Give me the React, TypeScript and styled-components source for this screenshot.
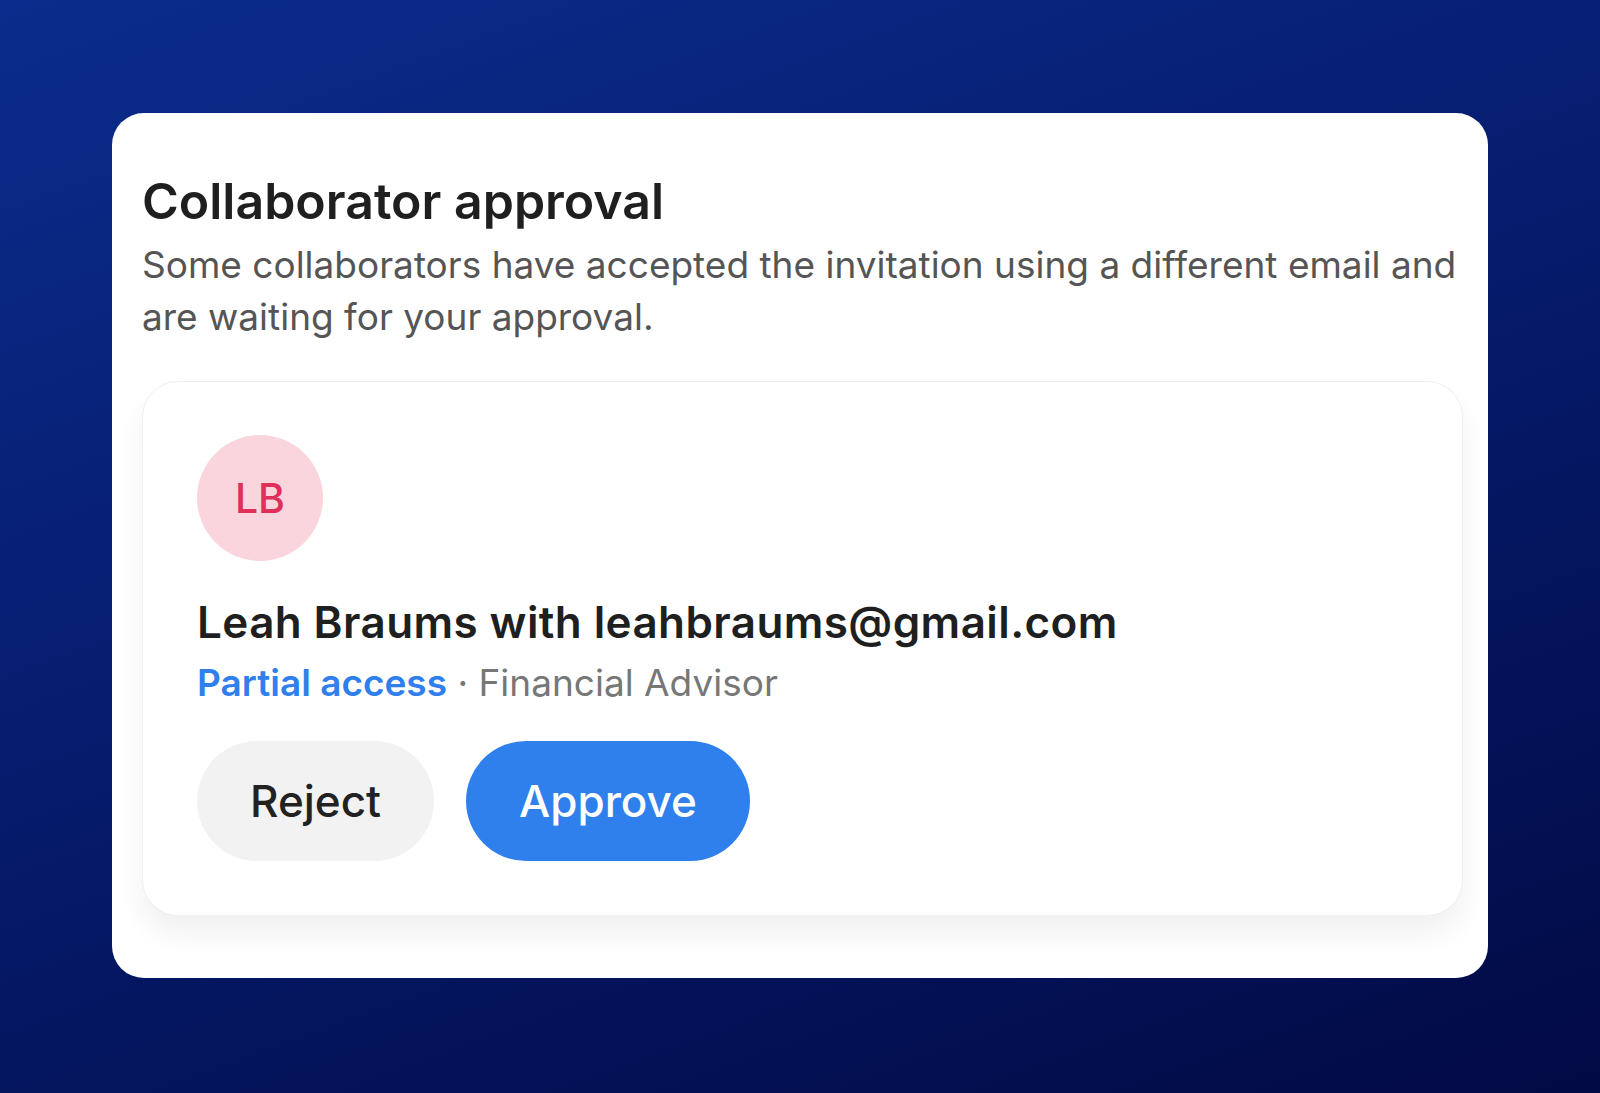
import styled, { createGlobalStyle } from "styled-components"

const GlobalStyle = createGlobalStyle`
	html, body {
		margin: 0;
		padding: 0;
	}
	body {
		font-family: Inter, "Noto Sans", "Liberation Sans", sans-serif;
		-webkit-font-smoothing: antialiased;
	}
`

const Page = styled.div`
	box-sizing: border-box;
	width: 1600px;
	height: 1093px;
	padding: 113px 112px 0;
	background: linear-gradient(160deg, #0b2c8c 0%, #061c6e 45%, #020a45 100%);
`

const Panel = styled.section`
	box-sizing: border-box;
	width: 1376px;
	height: 865px;
	padding: 60px 25px 0 30px;
	background: #fff;
	border-radius: 32px;
`

const Title = styled.h1`
	margin: 0;
	font-size: 50px;
	line-height: 56px;
	font-weight: 600;
	color: #1f1f1f;
`

const Description = styled.p`
	margin: 10px 0 0;
	font-size: 37px;
	line-height: 52px;
	font-weight: 400;
	color: #555;
`

const RequestCard = styled.div`
	box-sizing: border-box;
	margin-top: 38px;
	padding: 53px 54px 54px;
	border: 1px solid #efefef;
	border-radius: 36px;
	background: #fff;
	box-shadow: 0 18px 28px rgba(20, 20, 40, 0.06);
`

const Avatar = styled.div<{ $bg: string; $fg: string }>`
	display: flex;
	align-items: center;
	justify-content: center;
	width: 126px;
	height: 126px;
	border-radius: 50%;
	background: ${(p) => p.$bg};
	color: ${(p) => p.$fg};
	font-size: 41px;
	font-weight: 500;
`

const Name = styled.div`
	margin-top: 33px;
	font-size: 44px;
	line-height: 56px;
	font-weight: 600;
	color: #1f1f1f;
	letter-spacing: 0.4px;
`

const Meta = styled.div`
	margin-top: 9px;
	font-size: 37px;
	line-height: 48px;
	color: #777;
`

const Access = styled.span`
	color: #2f80ed;
	font-weight: 600;
`

const Actions = styled.div`
	display: flex;
	gap: 32px;
	margin-top: 34px;
`

const Button = styled.button<{ $primary?: boolean }>`
	height: 120px;
	padding: 0 53px;
	border: none;
	border-radius: 60px;
	font-family: inherit;
	font-size: 44px;
	font-weight: 500;
	background: ${(p) => (p.$primary ? "#2f80ed" : "#f2f2f2")};
	color: ${(p) => (p.$primary ? "#fff" : "#222")};
	cursor: pointer;
`

export default function App() {
	return (
		<>
			<GlobalStyle />
			<Page>
				<Panel>
					<Title>Collaborator approval</Title>
					<Description>
						Some collaborators have accepted the invitation using a
						different email and are waiting for your approval.
					</Description>
					<RequestCard>
						<Avatar $bg="#fbd5dd" $fg="#e0305a">
							LB
						</Avatar>
						<Name>Leah Braums with leahbraums@gmail.com</Name>
						<Meta>
							<Access>Partial access</Access> · Financial Advisor
						</Meta>
						<Actions>
							<Button>Reject</Button>
							<Button $primary>Approve</Button>
						</Actions>
					</RequestCard>
				</Panel>
			</Page>
		</>
	)
}
